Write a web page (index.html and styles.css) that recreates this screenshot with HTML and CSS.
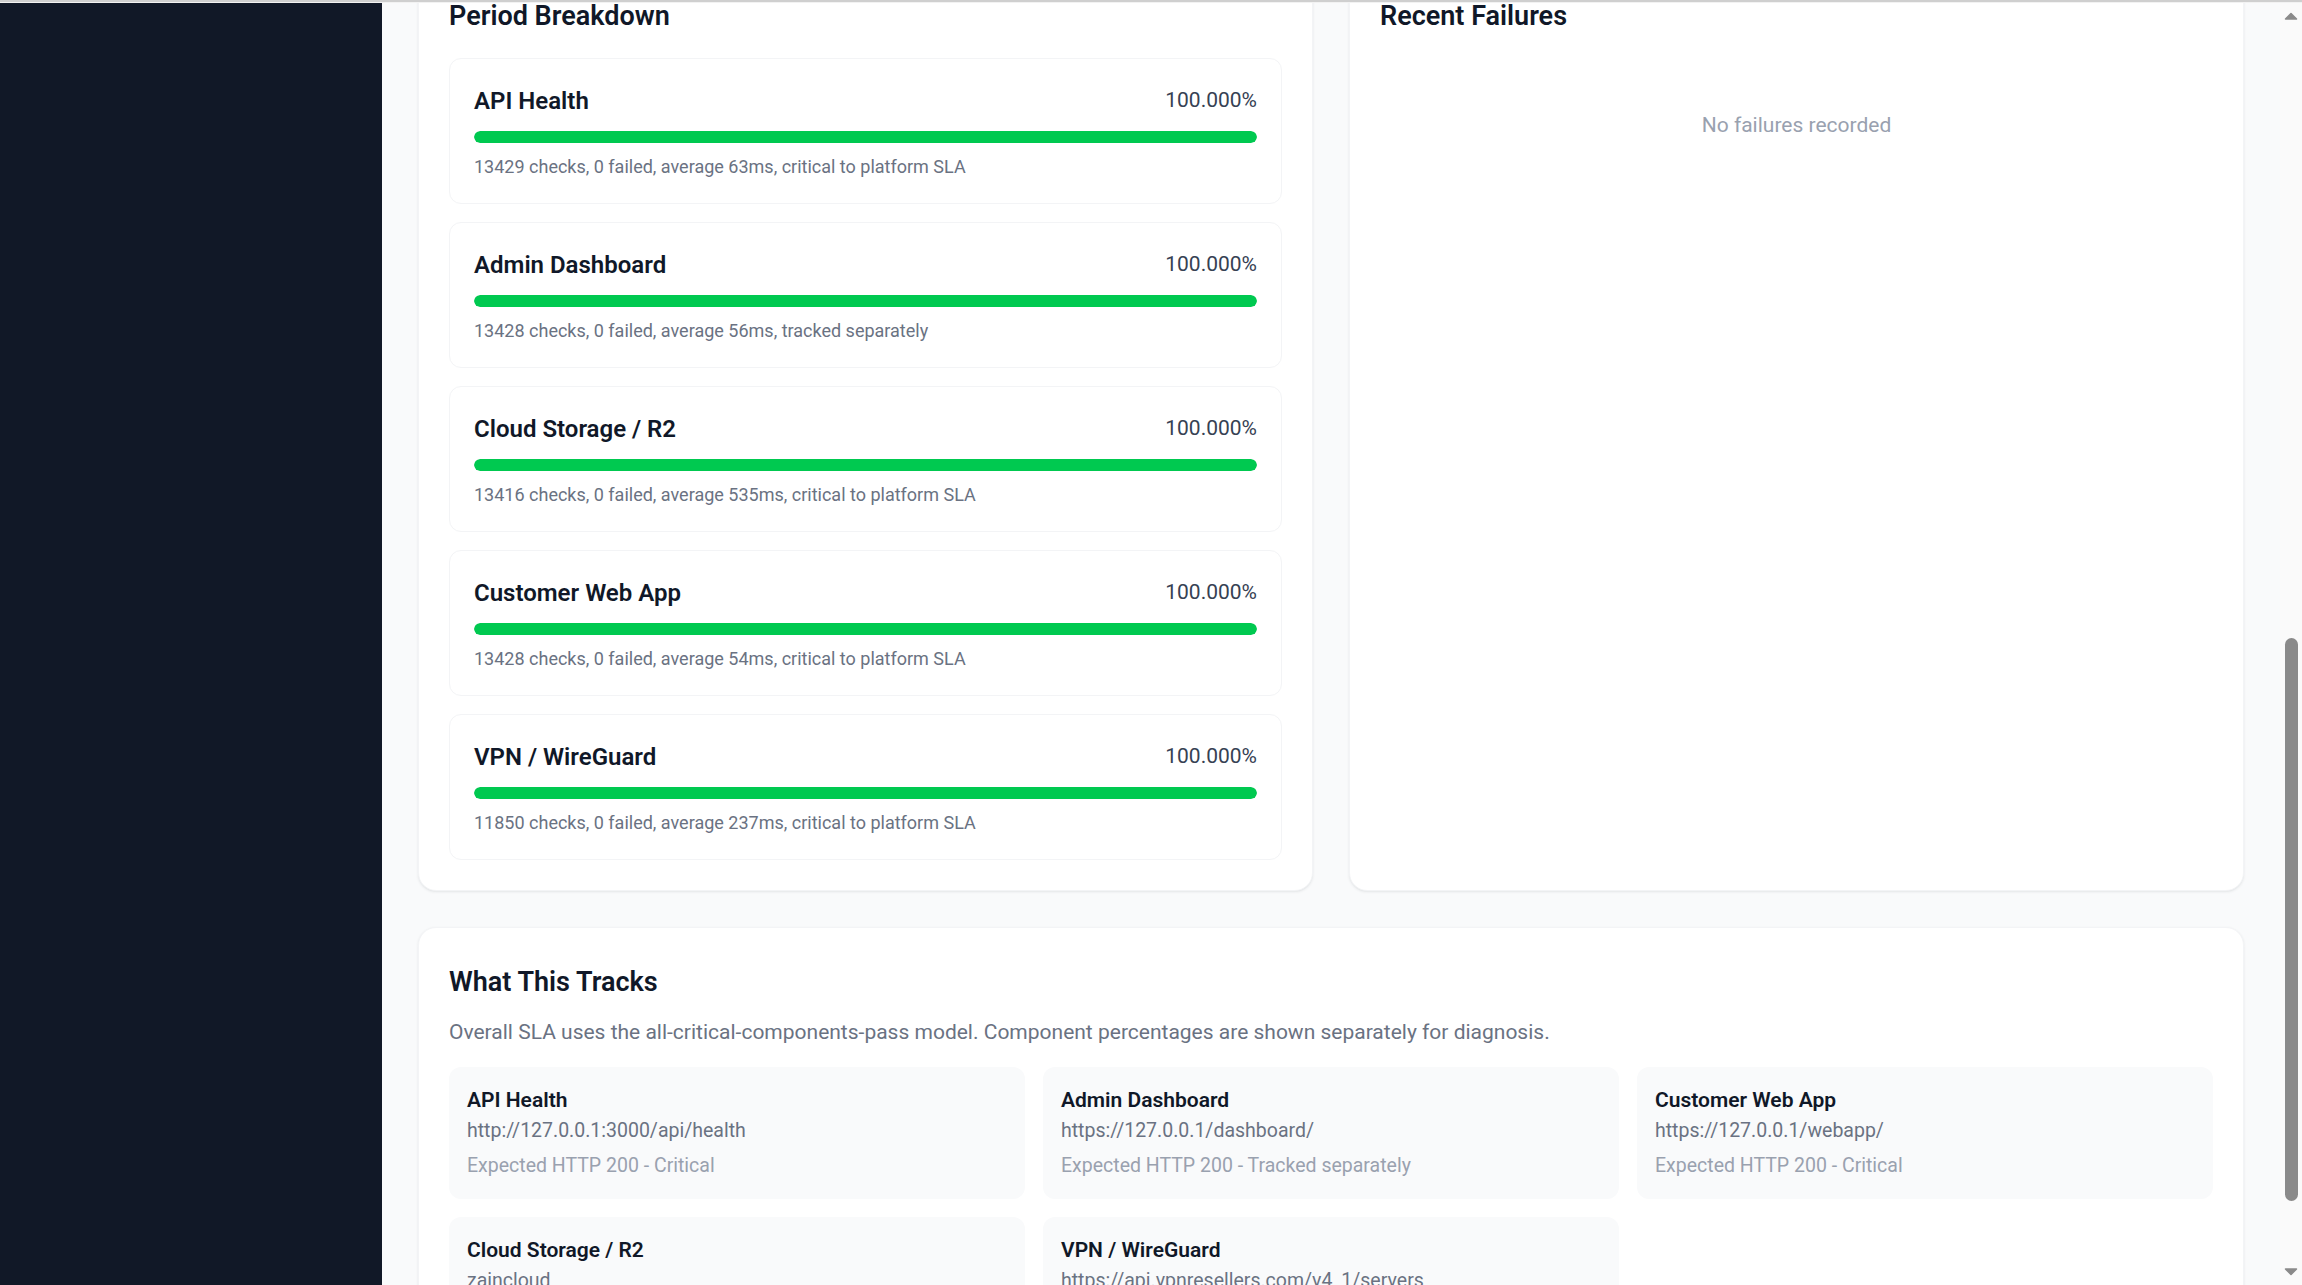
FILE: index.html
```html
<!DOCTYPE html>
<html lang="en">
<head>
<meta charset="utf-8">
<title>SLA Report</title>
<link rel="stylesheet" href="styles.css">
</head>
<body>
<div class="window">
  <div class="topline"></div>
  <div class="app">
    <aside class="sidebar"></aside>
    <main class="main" id="main">
      <header class="page-head">
        <div class="page-title">
          <h1>SLA Report</h1>
          <p>Availability of critical platform components for the selected period.</p>
        </div>
        <div class="range">
          <span class="range-btn">24 hours</span>
          <span class="range-btn">7 days</span>
          <span class="range-btn is-active">30 days</span>
          <span class="range-btn">90 days</span>
        </div>
      </header>

      <section class="stats">
        <div class="card stat">
          <span class="stat-label">Overall SLA</span>
          <span class="stat-value good">100.000%</span>
          <span class="stat-sub">All critical components passing</span>
        </div>
        <div class="card stat">
          <span class="stat-label">Total Checks</span>
          <span class="stat-value">65551</span>
          <span class="stat-sub">Across 5 components</span>
        </div>
        <div class="card stat">
          <span class="stat-label">Failed Checks</span>
          <span class="stat-value">0</span>
          <span class="stat-sub">No incidents in this period</span>
        </div>
        <div class="card stat">
          <span class="stat-label">Average Response</span>
          <span class="stat-value">189ms</span>
          <span class="stat-sub">Mean of component averages</span>
        </div>
      </section>

      <section class="card chart-card">
        <h2 class="card-title">Daily Availability</h2>
        <div class="chart">
          <span class="chart-bar"></span><span class="chart-bar"></span><span class="chart-bar"></span><span class="chart-bar"></span><span class="chart-bar"></span>
          <span class="chart-bar"></span><span class="chart-bar"></span><span class="chart-bar"></span><span class="chart-bar"></span><span class="chart-bar"></span>
          <span class="chart-bar"></span><span class="chart-bar"></span><span class="chart-bar"></span><span class="chart-bar"></span><span class="chart-bar"></span>
          <span class="chart-bar"></span><span class="chart-bar"></span><span class="chart-bar"></span><span class="chart-bar"></span><span class="chart-bar"></span>
          <span class="chart-bar"></span><span class="chart-bar"></span><span class="chart-bar"></span><span class="chart-bar"></span><span class="chart-bar"></span>
          <span class="chart-bar"></span><span class="chart-bar"></span><span class="chart-bar"></span><span class="chart-bar"></span><span class="chart-bar"></span>
        </div>
        <div class="chart-axis"><span>30 days ago</span><span>Today</span></div>
      </section>

      <section class="card history-card">
        <h2 class="card-title">Component History</h2>
        <div class="history-list">
          <div class="history-row"><span class="history-name">API Health</span><span class="history-strip"></span></div>
          <div class="history-row"><span class="history-name">Admin Dashboard</span><span class="history-strip"></span></div>
          <div class="history-row"><span class="history-name">Cloud Storage / R2</span><span class="history-strip"></span></div>
          <div class="history-row"><span class="history-name">Customer Web App</span><span class="history-strip"></span></div>
          <div class="history-row"><span class="history-name">VPN / WireGuard</span><span class="history-strip"></span></div>
        </div>
      </section>

      <div class="split">
        <section class="card breakdown-card" id="breakdown">
          <h2 class="card-title">Period Breakdown</h2>
          <div class="bd-list">
            <div class="bd-item">
              <div class="bd-head"><span class="bd-name">API Health</span><span class="bd-pct">100.000%</span></div>
              <div class="bar"><div class="bar-fill" style="width: 100%"></div></div>
              <p class="bd-detail">13429 checks, 0 failed, average 63ms, critical to platform SLA</p>
            </div>
            <div class="bd-item">
              <div class="bd-head"><span class="bd-name">Admin Dashboard</span><span class="bd-pct">100.000%</span></div>
              <div class="bar"><div class="bar-fill" style="width: 100%"></div></div>
              <p class="bd-detail">13428 checks, 0 failed, average 56ms, tracked separately</p>
            </div>
            <div class="bd-item">
              <div class="bd-head"><span class="bd-name">Cloud Storage / R2</span><span class="bd-pct">100.000%</span></div>
              <div class="bar"><div class="bar-fill" style="width: 100%"></div></div>
              <p class="bd-detail">13416 checks, 0 failed, average 535ms, critical to platform SLA</p>
            </div>
            <div class="bd-item">
              <div class="bd-head"><span class="bd-name">Customer Web App</span><span class="bd-pct">100.000%</span></div>
              <div class="bar"><div class="bar-fill" style="width: 100%"></div></div>
              <p class="bd-detail">13428 checks, 0 failed, average 54ms, critical to platform SLA</p>
            </div>
            <div class="bd-item">
              <div class="bd-head"><span class="bd-name">VPN / WireGuard</span><span class="bd-pct">100.000%</span></div>
              <div class="bar"><div class="bar-fill" style="width: 100%"></div></div>
              <p class="bd-detail">11850 checks, 0 failed, average 237ms, critical to platform SLA</p>
            </div>
          </div>
        </section>

        <section class="card failures-card">
          <h2 class="card-title">Recent Failures</h2>
          <p class="empty">No failures recorded</p>
        </section>
      </div>

      <section class="card tracks-card">
        <h2 class="card-title">What This Tracks</h2>
        <p class="note">Overall SLA uses the all-critical-components-pass model. Component percentages are shown separately for diagnosis.</p>
        <div class="tracks-grid">
          <div class="track">
            <div class="track-name">API Health</div>
            <div class="track-url">http://127.0.0.1:3000/api/health</div>
            <div class="track-meta">Expected HTTP 200 - Critical</div>
          </div>
          <div class="track">
            <div class="track-name">Admin Dashboard</div>
            <div class="track-url">https://127.0.0.1/dashboard/</div>
            <div class="track-meta">Expected HTTP 200 - Tracked separately</div>
          </div>
          <div class="track">
            <div class="track-name">Customer Web App</div>
            <div class="track-url">https://127.0.0.1/webapp/</div>
            <div class="track-meta">Expected HTTP 200 - Critical</div>
          </div>
          <div class="track">
            <div class="track-name">Cloud Storage / R2</div>
            <div class="track-url">zaincloud</div>
            <div class="track-meta">Bucket reachable - Critical</div>
          </div>
          <div class="track">
            <div class="track-name">VPN / WireGuard</div>
            <div class="track-url">https://api.vpnresellers.com/v4_1/servers</div>
            <div class="track-meta">Expected HTTP 200 - Critical</div>
          </div>
        </div>
      </section>
    </main>
    <div class="scrollbar" aria-hidden="true">
      <div class="sb-btn">
        <svg class="sb-arrow" viewBox="0 0 14 8" width="14" height="8"><polygon points="1.5,7 7,1.5 12.5,7" fill="#8a8a8a" stroke="#8a8a8a" stroke-width="1.5" stroke-linejoin="round"/></svg>
      </div>
      <div class="sb-track" id="track"><div class="sb-thumb" id="thumb"></div></div>
      <div class="sb-btn">
        <svg class="sb-arrow" viewBox="0 0 14 8" width="14" height="8"><polygon points="1.5,1 12.5,1 7,6.5" fill="#8a8a8a" stroke="#8a8a8a" stroke-width="1.5" stroke-linejoin="round"/></svg>
      </div>
    </div>
  </div>
</div>
<script src="script.js"></script>
</body>
</html>
```

FILE: styles.css
```css
* { box-sizing: border-box; }

html, body {
  margin: 0;
  height: 100%;
}

body {
  font-family: "Segoe UI", Roboto, "Noto Sans", "Liberation Sans", sans-serif;
  background: #f9fafb;
  color: #101828;
  overflow: hidden;
}

.window {
  height: 100vh;
  display: flex;
  flex-direction: column;
}

.topline {
  flex: 0 0 3px;
  border-top: 2px solid #cfcfcf;
  background: #f2f2f2;
}

.app {
  flex: 1;
  display: flex;
  min-height: 0;
}

.sidebar {
  flex: 0 0 382px;
  background: #111827;
}

.main {
  flex: 1;
  min-width: 0;
  position: relative;
  overflow-y: scroll;
  scrollbar-width: none;
  padding: 36px;
  background: #f9fafb;
}
.main::-webkit-scrollbar { width: 0; height: 0; display: none; }

/* drawn scrollbar */
.scrollbar {
  flex: 0 0 22px;
  display: flex;
  flex-direction: column;
  background: #fafafa;
}
.sb-btn {
  flex: 0 0 26px;
  display: flex;
  align-items: center;
  justify-content: center;
}
.sb-arrow { display: block; }
.sb-track {
  flex: 1;
  min-height: 0;
  display: flex;
  flex-direction: column;
  align-items: center;
}
.sb-thumb {
  flex: 0 0 auto;
  width: 13px;
  height: 560px;
  border-radius: 7px;
  background: #8a8a8a;
}

/* page header (above the fold) */
.page-head {
  display: flex;
  justify-content: space-between;
  align-items: flex-end;
  margin-bottom: 36px;
}
.page-title h1 {
  margin: 0;
  font-size: 36px;
  line-height: 54px;
  font-weight: 700;
}
.page-title p {
  margin: 0;
  font-size: 21px;
  line-height: 31.5px;
  color: #6a7282;
}
.range {
  display: flex;
  gap: 6px;
  padding: 6px;
  background: #fff;
  border: 1px solid #e5e7eb;
  border-radius: 12px;
}
.range-btn {
  font-size: 19.5px;
  line-height: 30px;
  padding: 6px 18px;
  border-radius: 8px;
  color: #4a5565;
}
.range-btn.is-active {
  background: #101828;
  color: #fff;
}

/* cards */
.card {
  background: #fff;
  border: 1px solid #f3f4f6;
  border-radius: 18px;
  box-shadow: 0 1px 3px rgba(16, 24, 40, 0.08), 0 1px 2px -1px rgba(16, 24, 40, 0.06);
  padding: 30px;
}

.card-title {
  margin: 0 0 21px;
  padding-top: 3px;
  font-size: 27px;
  line-height: 42px;
  font-weight: 600;
  color: #101828;
}

.stats {
  display: grid;
  grid-template-columns: repeat(4, 1fr);
  gap: 36px;
  margin-bottom: 36px;
}
.stat {
  display: flex;
  flex-direction: column;
}
.stat-label {
  font-size: 21px;
  line-height: 31.5px;
  color: #6a7282;
}
.stat-value {
  font-size: 36px;
  line-height: 54px;
  font-weight: 700;
  color: #101828;
}
.stat-value.good { color: #00a63e; }
.stat-sub {
  font-size: 18px;
  line-height: 27px;
  color: #99a1af;
}

.chart-card { margin-bottom: 36px; }
.chart {
  height: 306px;
  display: flex;
  align-items: flex-end;
  gap: 9px;
  border-bottom: 1px solid #e5e7eb;
}
.chart-bar {
  flex: 1;
  height: 100%;
  background: #00c950;
  border-radius: 6px 6px 0 0;
}
.chart-axis {
  display: flex;
  justify-content: space-between;
  font-size: 18px;
  line-height: 30px;
  color: #99a1af;
}

.history-card { margin-bottom: 36px; }
.history-list {
  display: flex;
  flex-direction: column;
  gap: 18px;
}
.history-row {
  display: flex;
  align-items: center;
  gap: 24px;
  height: 48px;
}
.history-name {
  flex: 0 0 260px;
  font-size: 21px;
  font-weight: 600;
}
.history-strip {
  flex: 1;
  height: 42px;
  border-radius: 6px;
  background: repeating-linear-gradient(90deg, #00c950 0 14px, transparent 14px 20px);
}

/* main grid */
.split {
  display: grid;
  grid-template-columns: 1fr 1fr;
  gap: 36px;
  margin-bottom: 36px;
}

.bd-list {
  display: flex;
  flex-direction: column;
  gap: 18px;
}
.bd-item {
  border: 1px solid #f3f4f6;
  border-radius: 12px;
  padding: 24px;
}
.bd-head {
  display: flex;
  justify-content: space-between;
  align-items: center;
}
.bd-name {
  font-size: 24px;
  line-height: 36px;
  font-weight: 600;
  color: #101828;
}
.bd-pct {
  font-size: 21px;
  line-height: 31.5px;
  color: #364153;
}
.bar {
  margin-top: 12px;
  height: 12px;
  border-radius: 999px;
  background: #f3f4f6;
  overflow: hidden;
}
.bar-fill {
  height: 100%;
  background: #00c950;
  border-radius: 999px;
}
.bd-detail {
  margin: 12px 0 0;
  font-size: 18px;
  line-height: 24px;
  color: #6a7282;
}

.empty {
  margin: 0;
  padding: 52px 0 48px;
  text-align: center;
  font-size: 21px;
  line-height: 31.5px;
  color: #99a1af;
}

.tracks-card .card-title { margin-bottom: 14px; }
.note {
  margin: 0 0 18px;
  font-size: 21px;
  line-height: 31.5px;
  color: #6a7282;
}
.tracks-grid {
  display: grid;
  grid-template-columns: repeat(3, 1fr);
  gap: 18px;
}
.track {
  background: #f9fafb;
  border-radius: 12px;
  padding: 18px;
}
.track-name {
  font-size: 21px;
  line-height: 31.5px;
  font-weight: 600;
  color: #101828;
}
.track-url {
  font-size: 19.5px;
  line-height: 29.25px;
  color: #6a7282;
}
.track-meta {
  margin-top: 6px;
  font-size: 19.5px;
  line-height: 29.25px;
  color: #99a1af;
}
```

FILE: script.js
```js
(function () {
  var main = document.getElementById('main');
  var card = document.getElementById('breakdown');
  var track = document.getElementById('track');
  var thumb = document.getElementById('thumb');
  function apply() {
    main.scrollTop = card.offsetTop + 42;
    var th = track.clientHeight;
    var sh = main.scrollHeight;
    thumb.style.height = (th * main.clientHeight / sh) + 'px';
    thumb.style.marginTop = (th * main.scrollTop / sh) + 'px';
  }
  apply();
  window.addEventListener('load', apply);
})();
```
